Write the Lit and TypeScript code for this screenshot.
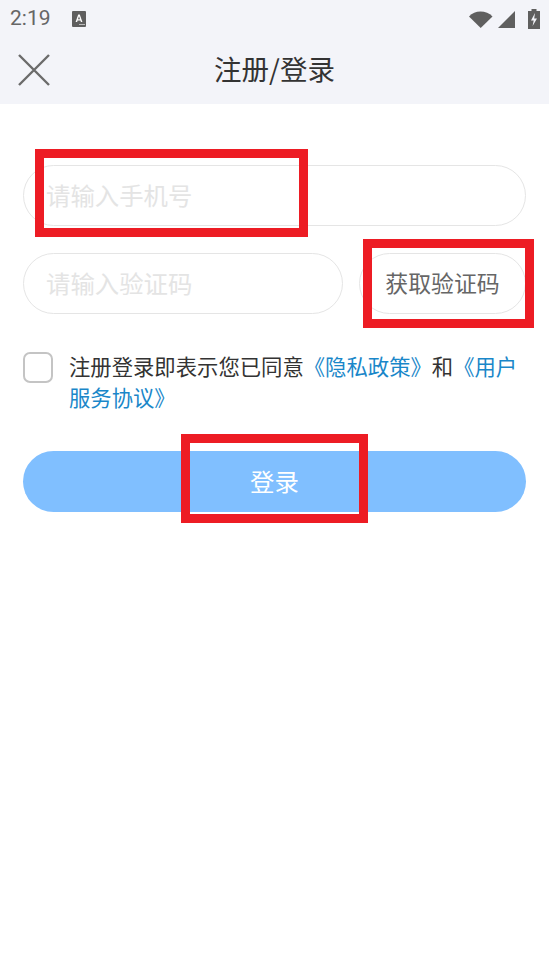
import { LitElement, css, html } from 'lit'
import { customElement } from 'lit/decorators.js'

@customElement('app-root')
export class AppRoot extends LitElement {
  static styles = css`
  :host {
    display: block;
    position: relative;
    width: 549px;
    height: 976px;
    overflow: hidden;
    background: #fff;
    font-family: "Noto Sans CJK SC", "Noto Sans", sans-serif;
  }

  .top {
    height: 104px;
    background: #f3f4f9;
  }

  .status {
    height: 37px;
    display: flex;
    align-items: center;
    padding: 0 9px 0 10px;
    color: #5f5f5f;
  }

  .time {
    font-family: Roboto, sans-serif;
    font-size: 21px;
    line-height: 37px;
    width: 62px;
    color: #666;
  }

  .status-icons {
    margin-left: auto;
    display: flex;
    align-items: center;
    gap: 5px;
  }

  .nav {
    height: 67px;
    display: flex;
    align-items: center;
    justify-content: center;
    position: relative;
  }

  .close {
    position: absolute;
    left: 17px;
    top: 16px;
  }

  .title {
    font-size: 27.5px;
    line-height: 63px;
    padding-bottom: 4px;
    color: #333;
  }

  .form {
    padding: 61px 23px 0;
    display: flex;
    flex-direction: column;
  }

  .field {
    box-sizing: border-box;
    height: 61px;
    border: 1px solid #e5e5e5;
    border-radius: 31px;
    display: flex;
    align-items: center;
    padding: 0 0 3px 22px;
    font-size: 24.4px;
    color: #e4e4e4;
  }

  .code-row {
    display: flex;
    gap: 16px;
    margin-top: 27px;
  }

  .code-row .field {
    width: 320px;
  }

  .code-btn {
    box-sizing: border-box;
    width: 167px;
    height: 61px;
    border: 1px solid #e5e5e5;
    border-radius: 31px;
    display: flex;
    align-items: center;
    justify-content: center;
    padding-bottom: 3px;
    font-size: 22.9px;
    color: #666;
  }

  .agree {
    display: flex;
    gap: 16px;
    margin-top: 38px;
  }

  .check {
    box-sizing: border-box;
    flex: none;
    width: 30px;
    height: 31px;
    border: 2px solid #c4c4c4;
    border-radius: 7px;
  }

  .agree-text {
    font-size: 21.35px;
    line-height: 31px;
    margin: -2px 0 2px;
    color: #333;
    white-space: nowrap;
  }

  .agree-text a {
    color: #1a87c9;
    text-decoration: none;
  }

  .login {
    box-sizing: border-box;
    height: 61px;
    margin-top: 37px;
    padding-bottom: 3px;
    border-radius: 31px;
    background: #80bfff;
    color: #fff;
    font-size: 24.4px;
    display: flex;
    align-items: center;
    justify-content: center;
  }

  .mark {
    position: absolute;
    box-sizing: border-box;
    border: 9px solid #ed1c24;
  }

  .mark.phone { left: 35px; top: 149px; width: 273px; height: 88px; }
  .mark.code { left: 363px; top: 239px; width: 171px; height: 89px; }
  .mark.submit { left: 181px; top: 434px; width: 187px; height: 89px; }

  .submit-gap {
    position: absolute;
    left: 190px;
    top: 512px;
    width: 169px;
    height: 2px;
    background: #fff;
  }
`

  render() {
    return html`
      <div class="top">
        <div class="status">
          <span class="time">2:19</span>
          <svg width="14" height="16" viewBox="0 0 14 16">
            <rect width="14" height="16" rx="1" fill="#5f5f5f"></rect>
            <path d="M3.6 11 6.2 3.6h1.6L10.4 11H8.9l-.5-1.6H5.6L5.1 11zM6 8.200h2L7 5.200z" fill="#fff"></path>
            <rect x="7" y="13" width="6" height="1" fill="#bbb"></rect>
          </svg>
          <div class="status-icons">
            <svg width="24" height="18" viewBox="0 0 24 18">
              <path d="M0 6.500C3 3.200 7 1.500 11.500 1.500S20.500 3.200 23.500 6.500L11.700 18z" fill="#5f5f5f"></path>
            </svg>
            <svg width="18" height="18" viewBox="0 0 18 18">
              <path d="M0 18 17 1v17z" fill="#5f5f5f"></path>
            </svg>
            <svg width="12" height="20" viewBox="0 0 12 20" style="margin-left:7px">
              <path d="M3.500 0h5v2H12v18H0V2h3.500z" fill="#5f5f5f"></path>
              <path d="M7 4 3 11.500h2.700L4.600 17 9 9.500H6.200z" fill="#f3f4f9"></path>
            </svg>
          </div>
        </div>
        <div class="nav">
          <svg class="close" width="34" height="34" viewBox="0 0 34 34">
            <path d="M2 2 32 32M32 2 2 32" stroke="#6b6b6b" stroke-width="2.400" fill="none"></path>
          </svg>
          <span class="title">注册/登录</span>
        </div>
      </div>

      <div class="form">
        <div class="field">请输入手机号</div>
        <div class="code-row">
          <div class="field">请输入验证码</div>
          <div class="code-btn">获取验证码</div>
        </div>
        <div class="agree">
          <div class="check"></div>
          <div class="agree-text">
            <div>注册登录即表示您已同意<a>《隐私政策》</a>和<a>《用户</a></div>
            <div><a>服务协议》</a></div>
          </div>
        </div>
        <div class="login">登录</div>
      </div>

      <div class="submit-gap"></div>
      <div class="mark phone"></div>
      <div class="mark code"></div>
      <div class="mark submit"></div>
    `
  }
}
